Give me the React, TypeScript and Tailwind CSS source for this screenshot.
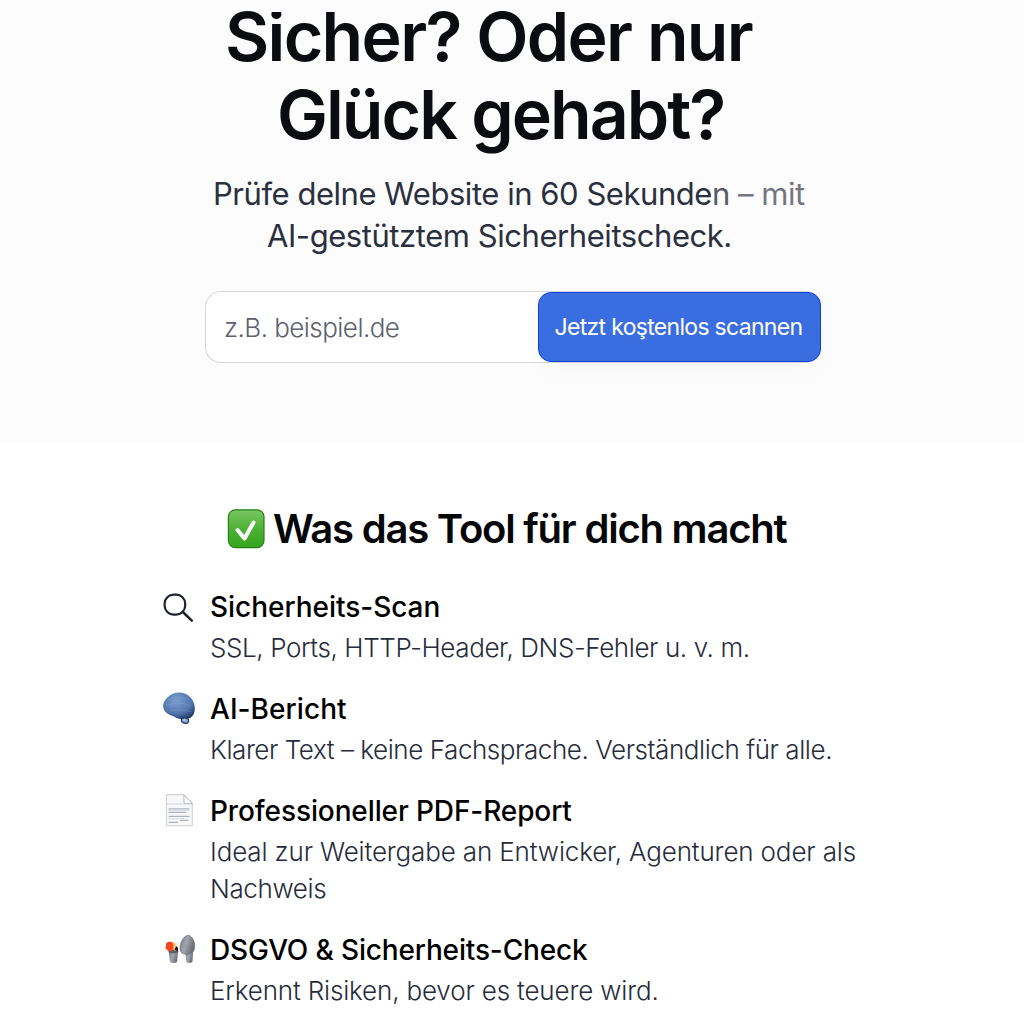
import React from "react";

function Line({ children, className }: { children: React.ReactNode; className: string }) {
  return <span className={"block w-max whitespace-nowrap " + className}>{children}</span>;
}

const CheckIcon = () => (
  <svg className="h-[40px] w-[38px]" viewBox="0 0 38 40" fill="none">
    <defs>
      <linearGradient id="check" x1="0" y1="0" x2="0" y2="1">
        <stop offset="0" stopColor="#7cc765" />
        <stop offset="0.5" stopColor="#4cb135" />
        <stop offset="1" stopColor="#35a51c" />
      </linearGradient>
    </defs>
    <rect x="1.4" y="0.8" width="35.6" height="37.8" rx="7" fill="url(#check)" stroke="#238018" strokeWidth="1.2" />
    <path d="M10.5 21 L17.5 29.5 L26.5 13.5" stroke="white" strokeWidth="4" strokeLinecap="round" strokeLinejoin="round" />
  </svg>
);

const MagnifierIcon = () => (
  <svg className="h-[34px] w-[34px]" viewBox="0 0 34 34" fill="none" stroke="#1d222e">
    <rect x="2.6" y="4.6" width="20.6" height="20" rx="9.2" strokeWidth="2.2" />
    <path d="M20.6 21.8 L29.8 30.6" strokeWidth="2.6" strokeLinecap="round" />
  </svg>
);

const BrainIcon = () => (
  <svg className="h-[34px] w-[34px]" viewBox="0 0 34 34" fill="none">
    <defs>
      <radialGradient id="brain" cx="0.42" cy="0.3" r="0.75">
        <stop offset="0" stopColor="#7c9ecd" />
        <stop offset="0.65" stopColor="#5176ae" />
        <stop offset="1" stopColor="#1d3866" />
      </radialGradient>
    </defs>
    <path d="M1.2 12.5 C2.5 7 8.5 0.6 17.5 0.6 C25.5 0.6 32.6 7.4 32.8 16 C33 21.5 30.5 25.4 26.5 26.4 C22 28.2 15.5 27.2 11.5 24.3 C7.5 22.8 0.2 20.5 1.2 12.5Z" fill="url(#brain)" />
    <path d="M6 8 C11 4.5 17 4 24 7 M4.5 14 C11 10 20 10 28 14 M8 19 C14 17 23 18 30 20 M10 11 C12 13 10 15 8 16" stroke="#b5c9e5" strokeOpacity="0.2" strokeWidth="0.8" />
    <ellipse cx="23" cy="28.6" rx="3.7" ry="2.6" transform="rotate(15 23 28.6)" fill="#86a5cc" stroke="#1a335b" strokeWidth="1.1" />
    <path d="M21.2 28 L23.4 27.8" stroke="#d7e5f5" strokeWidth="1.2" />
  </svg>
);

const DocumentIcon = () => (
  <svg className="h-[34px] w-[34px]" viewBox="0 0 34 34" fill="none">
    <path d="M4.4 0.6 H22 L30.3 9.3 V31.8 H4.4Z" fill="#f8f8fa" stroke="#c9ccd3" strokeWidth="1" />
    <path d="M22 0.6 V9.3 H30.3Z" fill="#fff" stroke="#b3b7c0" strokeWidth="1" />
    <path d="M5 10 H30" stroke="#cfd2d9" />
    <path d="M6.5 14.8 H27.5 M6.5 18.4 H24 M6.5 22.4 H27.5 M6.5 28.4 H16 M18 26.4 H26.5" stroke="#adb3c0" strokeWidth="1.3" />
    <path d="M6.5 16.4 H27 M6.5 24.8 H22" stroke="#d5d8df" />
  </svg>
);

const CheckupIcon = () => (
  <svg className="h-[34px] w-[34px]" viewBox="0 0 34 34" fill="none">
    <defs>
      <linearGradient id="stone" x1="0" y1="0" x2="1" y2="0.4">
        <stop offset="0" stopColor="#777c83" />
        <stop offset="0.5" stopColor="#a1a5ac" />
        <stop offset="1" stopColor="#696e75" />
      </linearGradient>
    </defs>
    <path d="M23.2 18 H31.2 L30.4 29 Q27.3 30.8 24.3 29Z" fill="url(#stone)" />
    <path d="M6.6 18 H16.2 L15 29 Q11.4 31 8 29Z" fill="url(#stone)" />
    <ellipse cx="11.4" cy="18.4" rx="4.9" ry="1.8" fill="#5b6066" />
    <path d="M26.3 2.2 C31.4 3.4 33.7 11 32.3 16.2 C31 21.2 24 22.8 19.8 19.8 C15.4 15.6 20 3 26.3 2.2Z" fill="url(#stone)" stroke="#696e74" strokeWidth="0.7" />
    <path d="M10 9.8 H14.5 V13.5 H16 V17.5 H13 L11 16Z" fill="#f4d7a8" />
    <path d="M14 13 L16 14.8 V18.4 L12.6 16.8Z" fill="#191a1c" />
    <path d="M4.2 10 L7.3 8.4 L11.4 9.6 L11.3 17.2 L7.2 18.4 L3.6 15.8Z" fill="#f1481d" />
    <path d="M10 9.8 L12 11.8 L11.3 16.8" stroke="#ff9b3e" strokeWidth="1.1" />
  </svg>
);

const features = [
  {
    icon: <MagnifierIcon />,
    title: "Sicherheits-Scan",
    titleClass: "tracking-[-0.03px]",
    lines: [{ text: "SSL, Ports, HTTP-Header, DNS-Fehler u. v. m.", cls: "tracking-[-0.4px]" }],
  },
  {
    icon: <BrainIcon />,
    title: "AI-Bericht",
    titleClass: "tracking-[0.06px]",
    lines: [{ text: "Klarer Text – keine Fachsprache. Verständlich für alle.", cls: "tracking-[-0.43px]" }],
  },
  {
    icon: <DocumentIcon />,
    title: "Professioneller PDF-Report",
    titleClass: "tracking-[-0.11px]",
    lines: [
      { text: "Ideal zur Weitergabe an Entwicker, Agenturen oder als", cls: "tracking-[-0.15px]" },
      { text: "Nachweis", cls: "tracking-[-0.35px]" },
    ],
  },
  {
    icon: <CheckupIcon />,
    title: "DSGVO & Sicherheits-Check",
    titleClass: "tracking-[-0.15px]",
    lines: [{ text: "Erkennt Risiken, bevor es teuere wird.", cls: "tracking-[-0.16px]" }],
  },
];

export default function App() {
  return (
    <div className="h-[1024px] w-[1024px] overflow-hidden bg-white font-['Inter',sans-serif]">
      <header className="h-[442px] bg-[#fcfcfc]">
        <h1 className="relative text-[68px] font-semibold text-[#0b0c10]">
          <Line className="ml-[225px] leading-[72px] tracking-[-1.67px]">Sicher? Oder nur</Line>
          <Line className="ml-[277px] leading-[84px] tracking-[-1.95px]">Glück gehabt?</Line>
          <span className="absolute top-0 left-[268px] h-[12px] w-[16px] bg-[#fcfcfc]" />
        </h1>
        <p className="mt-[17px] text-[31px] leading-[42px] text-[#2b3040]">
          <Line className="ml-[213px] tracking-[-0.46px]">
            Prüfe delne Website in 60 Sekunde<span className="text-[#555a66]">n</span> <span className="text-[#737680]">– mit</span>
          </Line>
          <Line className="ml-[267px] tracking-[-0.44px]">AI-gestütztem Sicherheitscheck.</Line>
        </p>
        <form className="mt-[34px] ml-[205px] flex h-[72px] w-[616px] rounded-[16px] border border-[#d3d9dd] border-r-transparent bg-white">
          <div className="flex flex-1 items-center pl-[18px] text-[26px] font-[350] text-[#5c616d]">
            <Line className="tracking-[-0.55px]">z.B. beispiel.de</Line>
          </div>
          <button
            type="button"
            className="-mr-px flex h-[70px] w-[283px] items-center justify-center rounded-[13px] border border-[#0b41d8] bg-[#3a6ee0] pt-px pr-[2px] text-[23px] text-white shadow-[0_10px_20px_rgba(0,0,0,0.02)]"
          >
            <Line className="tracking-[-0.69px]">Jetzt koştenlos scannen</Line>
          </button>
        </form>
      </header>
      <main>
        <h2 className="mt-[61px] flex h-[52px] items-center pl-[227px]">
          <CheckIcon />
          <Line className="ml-[8px] text-[40px] font-semibold tracking-[-1.22px] text-[#050608]">Was das Tool für dich macht</Line>
        </h2>
        <ul className="mt-[32px] ml-[162px] flex flex-col gap-[23px]">
          {features.map((feature) => (
            <li key={feature.title} className="flex gap-[14px]">
              <div className="pt-[3px]">{feature.icon}</div>
              <div>
                <h3 className="h-[42px] text-[28px] leading-[41px] font-medium text-black">
                  <Line className={feature.titleClass}>{feature.title}</Line>
                </h3>
                <p className="text-[26px] leading-[37px] font-[340] text-[#272c3b]">
                  {feature.lines.map((line) => (
                    <Line key={line.text} className={line.cls}>{line.text}</Line>
                  ))}
                </p>
              </div>
            </li>
          ))}
        </ul>
      </main>
    </div>
  );
}
